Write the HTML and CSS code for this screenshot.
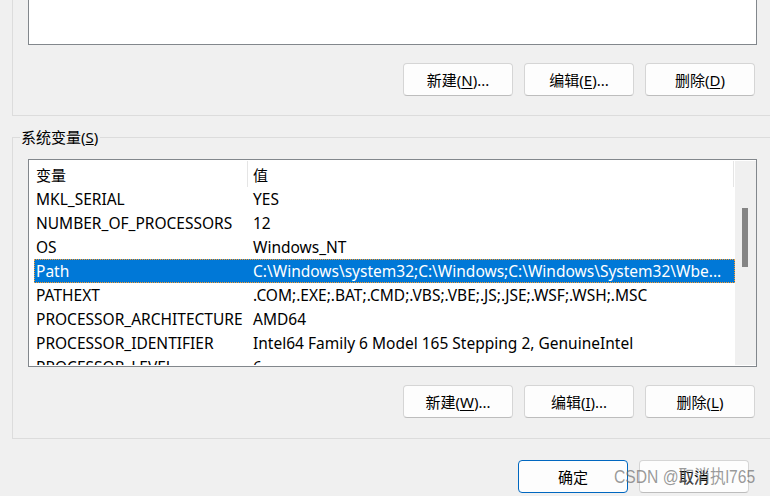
FILE: index.html
```html
<!DOCTYPE html>
<html lang="zh-CN">
<head>
<meta charset="utf-8">
<title>环境变量</title>
<link rel="stylesheet" href="styles.css">
</head>
<body>
<div class="dialog">
  <section class="group group-user">
    <div class="listbox listbox-top"></div>
    <div class="btn-row">
      <button class="btn">新建(<u>N</u>)...</button>
      <button class="btn">编辑(<u>E</u>)...</button>
      <button class="btn">删除(<u>D</u>)</button>
    </div>
  </section>

  <section class="group group-sys">
    <span class="group-label">系统变量(<u>S</u>)</span>
    <div class="listbox listview">
      <div class="lv-body">
        <div class="lv-header">
          <span class="h1">变量</span>
          <span class="h2">值</span>
        </div>
        <div class="lv-row"><span class="c1">MKL_SERIAL</span><span class="c2">YES</span></div>
        <div class="lv-row"><span class="c1">NUMBER_OF_PROCESSORS</span><span class="c2">12</span></div>
        <div class="lv-row"><span class="c1">OS</span><span class="c2">Windows_NT</span></div>
        <div class="lv-row selected"><span class="c1">Path</span><span class="c2">C:\Windows\system32;C:\Windows;C:\Windows\System32\Wbe...</span></div>
        <div class="lv-row"><span class="c1">PATHEXT</span><span class="c2">.COM;.EXE;.BAT;.CMD;.VBS;.VBE;.JS;.JSE;.WSF;.WSH;.MSC</span></div>
        <div class="lv-row"><span class="c1">PROCESSOR_ARCHITECTURE</span><span class="c2">AMD64</span></div>
        <div class="lv-row"><span class="c1">PROCESSOR_IDENTIFIER</span><span class="c2">Intel64 Family 6 Model 165 Stepping 2, GenuineIntel</span></div>
        <div class="lv-row"><span class="c1">PROCESSOR_LEVEL</span><span class="c2">6</span></div>
      </div>
      <div class="scrollbar"><div class="thumb"></div></div>
    </div>
    <div class="btn-row">
      <button class="btn">新建(<u>W</u>)...</button>
      <button class="btn">编辑(<u>I</u>)...</button>
      <button class="btn">删除(<u>L</u>)</button>
    </div>
  </section>

  <div class="footer">
    <button class="btn btn-default">确定</button>
    <button class="btn">取消</button>
  </div>

  <div class="watermark">CSDN @取消执l765</div>
</div>
</body>
</html>
```

FILE: styles.css
```css
html, body {
  margin: 0;
  padding: 0;
}

body {
  width: 770px;
  height: 496px;
  overflow: hidden;
  background: #f0f0f0;
  color: #000;
  font-family: "Noto Sans", "Noto Sans CJK SC", sans-serif;
  font-size: 15px;
}

.dialog {
  position: relative;
  width: 770px;
  height: 496px;
  overflow: hidden;
}

.group {
  position: relative;
  margin-left: 12px;
  margin-right: -20px;
  border: 1px solid #dcdcdc;
  padding: 0 32px 19px 15px;
}

.group-user {
  margin-top: -30px;
}

.group-sys {
  margin-top: 21px;
  padding-top: 21px;
  padding-bottom: 20px;
}

.group-label {
  position: absolute;
  left: 7px;
  top: -11px;
  line-height: 20px;
  padding: 0 2px 0 1px;
  background: #f0f0f0;
}

.listbox {
  box-sizing: border-box;
  border: 1px solid #82878c;
  background: #fff;
}

.listbox-top {
  height: 74px;
}

.btn-row {
  display: flex;
  justify-content: flex-end;
  gap: 11px;
  margin-top: 18px;
  margin-right: 2px;
}

.btn {
  box-sizing: border-box;
  width: 110px;
  height: 33px;
  padding: 0;
  border: 1px solid #d5d5d5;
  border-bottom-color: #bdbdbd;
  border-radius: 4px;
  background: #fdfdfd;
  color: #000;
  font-family: inherit;
  font-size: 15px;
  line-height: 20px;
}

.btn u {
  text-underline-offset: 2px;
}

.btn-default {
  border: 1px solid #0067c0;
}

.listview {
  display: flex;
  height: 208px;
  padding: 1px 0 1px 0;
  font-size: 15.5px;
}

.lv-body {
  flex: 1;
  min-width: 0;
  overflow: hidden;
  padding-left: 5px;
}

.lv-header {
  display: flex;
  height: 26px;
  align-items: stretch;
  font-size: 15px;
}

.lv-header span {
  display: flex;
  align-items: center;
  box-sizing: border-box;
}

.h1 {
  width: 214px;
  padding-left: 2px;
  border-right: 1px solid #e5e5e5;
}

.h2 {
  width: 486px;
  padding-left: 5px;
  border-right: 1px solid #e5e5e5;
}

.lv-row {
  display: flex;
  align-items: center;
  height: 24px;
  white-space: nowrap;
  box-sizing: border-box;
}

.c1 {
  box-sizing: border-box;
  width: 217px;
  flex: none;
  padding-left: 2px;
}

.c2 {
  padding-left: 2px;
}

.lv-row.selected {
  background: #0078d7;
  color: #fff;
  outline: 1px dotted #ff9d2a;
  outline-offset: -1px;
}

.scrollbar {
  width: 21px;
  flex: none;
  background: #f0f0f0;
}

.thumb {
  width: 6px;
  height: 59px;
  margin-top: 47px;
  margin-left: 7px;
  background: #858585;
}

.footer {
  display: flex;
  justify-content: flex-end;
  gap: 11px;
  margin-top: 21px;
  padding-right: 21px;
}

.watermark {
  position: absolute;
  left: 614px;
  top: 466px;
  font-family: "Liberation Sans", "Noto Sans CJK SC", sans-serif;
  font-size: 18px;
  line-height: 22px;
  color: rgba(110, 110, 110, 0.7);
  transform: scaleX(0.87);
  transform-origin: left center;
  white-space: nowrap;
}
```
